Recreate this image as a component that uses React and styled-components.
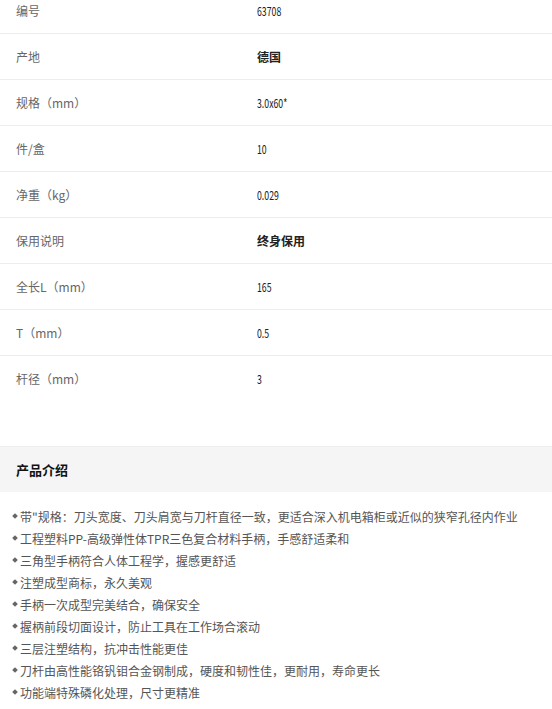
import styled, { createGlobalStyle } from "styled-components";

const GlobalStyle = createGlobalStyle`
  body {
    margin: 0;
    background: #fff;
    font-family: "Noto Sans CJK SC", sans-serif;
  }
`;

// spec rows as shown on the product page
const SPECS = [
  { label: "编号", value: "63708", narrow: true },
  { label: "产地", value: "德国", bold: true },
  { label: "规格（mm）", value: "3.0x60*", narrow: true },
  { label: "件/盒", value: "10", narrow: true },
  { label: "净重（kg）", value: "0.029", narrow: true },
  { label: "保用说明", value: "终身保用", bold: true },
  { label: "全长L（mm）", value: "165", narrow: true },
  { label: "T（mm）", value: "0.5", narrow: true },
  { label: "杆径（mm）", value: "3", narrow: true },
];

const FEATURES = [
  "带\"规格：刀头宽度、刀头肩宽与刀杆直径一致，更适合深入机电箱柜或近似的狭窄孔径内作业",
  "工程塑料PP-高级弹性体TPR三色复合材料手柄，手感舒适柔和",
  "三角型手柄符合人体工程学，握感更舒适",
  "注塑成型商标，永久美观",
  "手柄一次成型完美结合，确保安全",
  "握柄前段切面设计，防止工具在工作场合滚动",
  "三层注塑结构，抗冲击性能更佳",
  "刀杆由高性能铬钒钼合金钢制成，硬度和韧性佳，更耐用，寿命更长",
  "功能端特殊磷化处理，尺寸更精准",
];

const Page = styled.div`
  width: 552px;
  overflow: hidden;
`;

const SpecTable = styled.div`
  margin-top: -12px;
  padding-bottom: 44px;
`;

const SpecRow = styled.div`
  display: grid;
  grid-template-columns: 241px 1fr;
  align-items: center;
  height: 45px;
  padding-left: 16px;
  border-bottom: 1px solid ${(p) => (p.$last ? "transparent" : "#ededed")};
  font-size: 12px;
`;

const Label = styled.span`
  color: #666;
`;

const Value = styled.span`
  justify-self: start;
  display: inline-block;
  color: #222;
  font-size: ${(p) => (p.$narrow ? "12.5px" : "12px")};
  font-weight: ${(p) => (p.$bold ? 700 : 400)};
  transform: ${(p) => (p.$narrow ? "scaleX(0.7)" : "none")};
  transform-origin: left center;
`;

const SectionHead = styled.div`
  display: flex;
  align-items: center;
  height: 45px;
  padding-left: 16px;
  background: #f5f5f5;
  border-top: 1px solid #eee;
  font-size: 13px;
  font-weight: 700;
  color: #111;
`;

const FeatureList = styled.ul`
  list-style: none;
  margin: 0;
  padding: 13px 0 0 12px;
`;

const FeatureItem = styled.li`
  display: flex;
  align-items: center;
  height: 22px;
  font-size: 12px;
  color: #555;
  white-space: nowrap;

  &::before {
    content: "";
    width: 4px;
    height: 4px;
    margin: 0 3px 0 1px;
    background: #666;
    transform: rotate(45deg);
    flex-shrink: 0;
  }
`;

const App = () => (
  <Page>
    <GlobalStyle />
    <SpecTable>
      {SPECS.map((s, i) => (
        <SpecRow key={s.label} $last={i === SPECS.length - 1}>
          <Label>{s.label}</Label>
          <Value $bold={s.bold} $narrow={s.narrow}>{s.value}</Value>
        </SpecRow>
      ))}
    </SpecTable>

    <SectionHead>产品介绍</SectionHead>

    <FeatureList>
      {FEATURES.map((f) => (
        <FeatureItem key={f}>{f}</FeatureItem>
      ))}
    </FeatureList>
  </Page>
);

export default App;
